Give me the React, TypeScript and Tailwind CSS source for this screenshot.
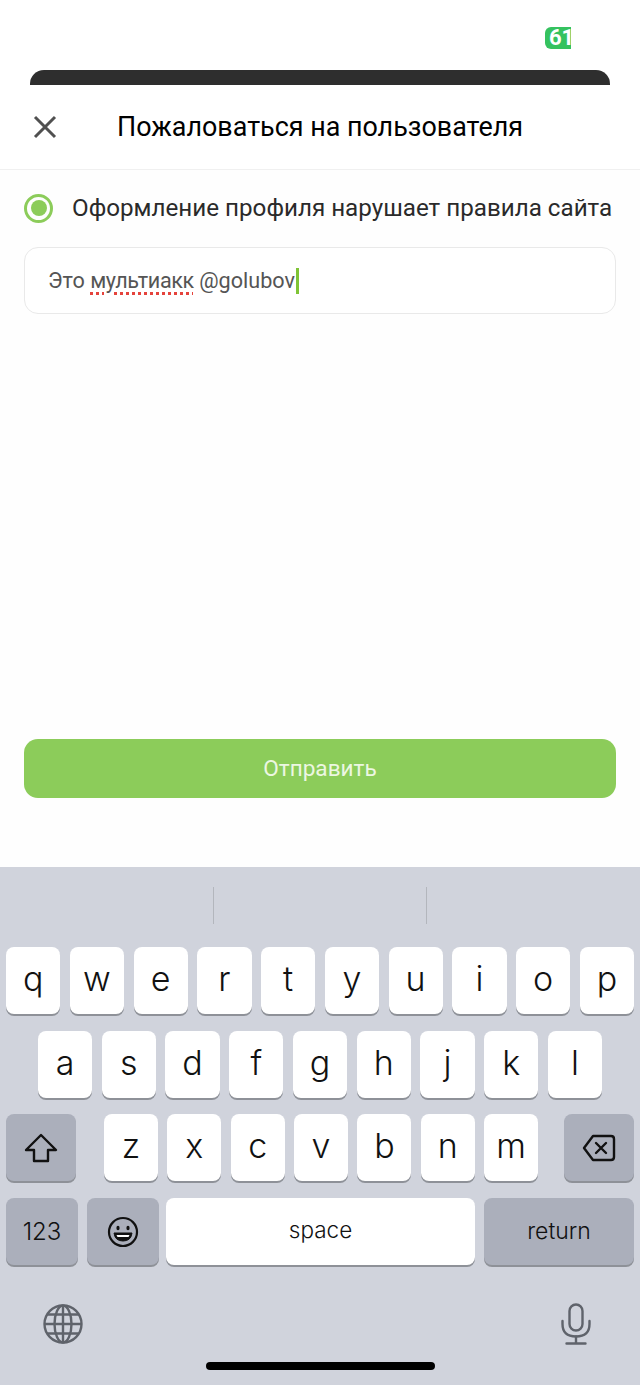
import React from 'react';

const rowOne = ['q', 'w', 'e', 'r', 't', 'y', 'u', 'i', 'o', 'p'];
const rowTwo = ['a', 's', 'd', 'f', 'g', 'h', 'j', 'k', 'l'];
const rowThree = ['z', 'x', 'c', 'v', 'b', 'n', 'm'];

const keyBase = 'flex h-[67px] items-center justify-center rounded-[8px] shadow-[0_2px_0_#8e9198]';

const LetterKey: React.FC<{ label: string }> = ({ label }) => (
  <div className={`${keyBase} flex-1 bg-white pb-1 font-['Inter',sans-serif] text-[34px] font-light text-[#111]`}>{label}</div>
);

const ShiftIcon = () => (
  <svg width="34" height="30" viewBox="0 0 34 30" fill="none" stroke="#111" strokeWidth="2.4" strokeLinejoin="round">
    <path d="M17 2 L32 17 H24 V28 H10 V17 H2 Z" />
  </svg>
);

const DeleteIcon = () => (
  <svg width="34" height="28" viewBox="0 0 34 28" fill="none" stroke="#111" strokeWidth="2.4" strokeLinejoin="round" strokeLinecap="round">
    <path d="M11 2 H29 Q32 2 32 5 V23 Q32 26 29 26 H11 L2 14 Z" />
    <path d="M14 9 L24 19 M24 9 L14 19" />
  </svg>
);

const EmojiIcon = () => (
  <svg width="32" height="32" viewBox="0 0 32 32" fill="none" stroke="#111" strokeWidth="2.2">
    <circle cx="16" cy="16" r="14" />
    <ellipse cx="11" cy="12" rx="1.6" ry="2.2" fill="#111" stroke="none" />
    <ellipse cx="21" cy="12" rx="1.6" ry="2.2" fill="#111" stroke="none" />
    <path d="M7 17 H25 Q24 25 16 25 Q8 25 7 17 Z" fill="#111" stroke="#111" strokeWidth="1" strokeLinejoin="round" />
    <path d="M9.5 19 H22.5 L21.5 21 H10.5 Z" fill="#fff" stroke="none" />
  </svg>
);

const GlobeIcon = () => (
  <svg width="40" height="40" viewBox="0 0 40 40" fill="none" stroke="#5f636b" strokeWidth="2.4">
    <circle cx="20" cy="20" r="18.5" />
    <ellipse cx="20" cy="20" rx="8.5" ry="18.5" />
    <path d="M20 1.5 V38.5 M1.5 20 H38.5 M4.5 10.5 H35.5 M4.5 29.5 H35.5" />
  </svg>
);

const MicIcon = () => (
  <svg width="30" height="42" viewBox="0 0 30 42" fill="none" stroke="#5f636b" strokeWidth="2.4" strokeLinecap="round">
    <rect x="8.5" y="1.5" width="13" height="26" rx="6.5" />
    <path d="M1.5 18 V21 Q1.5 33.5 15 33.5 Q28.5 33.5 28.5 21 V18" />
    <path d="M15 33.5 V40.5 M5.5 40.5 H24.5" />
  </svg>
);

const App: React.FC = () => {
  return (
    <div className="flex h-[1385px] w-[640px] flex-col overflow-hidden bg-white font-['Roboto',sans-serif]">
      <div className="h-[70px] pl-[545px] pt-[27px]">
        <div className="flex h-[22px] w-[26px] items-center overflow-hidden rounded-l-[6px] bg-[#35c25f] pl-[4px] text-[22px] font-bold leading-none text-white">
          61
        </div>
      </div>
      <div className="mx-[30px] h-[15px] rounded-t-[14px] bg-[#2e2e2e]" />

      <div className="relative flex h-[85px] items-center justify-center border-b border-[#f0f0f0]">
        <svg className="absolute left-[33px] top-[30px]" width="24" height="24" viewBox="0 0 24 24" fill="none" stroke="#505050" strokeWidth="3">
          <path d="M2 2 L22 22 M22 2 L2 22" />
        </svg>
        <h1 className="text-[26.9px] font-normal text-black">Пожаловаться на пользователя</h1>
      </div>

      <div className="flex flex-1 flex-col bg-[#fefefe] px-6">
        <div className="mt-5 flex items-center gap-[19px]">
          <div className="flex h-[29px] w-[29px] shrink-0 items-center justify-center rounded-full border-[3px] border-[#8ccc5a]">
            <div className="h-[16px] w-[16px] rounded-full bg-[#8ccc5a]" />
          </div>
          <span className="whitespace-nowrap text-[24.2px] text-[#2a2a2a]">Оформление профиля нарушает правила сайта</span>
        </div>

        <div className="mt-[21px] flex h-[67px] items-center rounded-[14px] border border-[#e9e9e9] bg-white pl-[23px] text-[21.6px] text-[#555]">
          <span>
            Это{' '}
            <span className="tracking-[-0.4px] underline decoration-[#e5433c] decoration-dotted decoration-[3px] underline-offset-[4px]">мультиакк</span>{' '}
            @golubov
          </span>
          <span className="ml-px h-[26px] w-[3px] bg-[#7fc436]" />
        </div>

        <button className="mt-auto mb-[69px] flex h-[59px] items-center justify-center rounded-[14px] bg-[#8ccc5a] text-[22.6px] text-[#ecf7e2]">
          Отправить
        </button>
      </div>

      <div className="flex h-[518px] flex-col bg-[#d0d3dc] px-[6px] font-['Inter',sans-serif]">
        <div className="flex h-[80px] items-start justify-center gap-[212px] pt-[20px]">
          <div className="h-[37px] w-px bg-[#b3b6bd]" />
          <div className="h-[37px] w-px bg-[#b3b6bd]" />
        </div>

        <div className="flex gap-[9.5px]">
          {rowOne.map(k => <LetterKey key={k} label={k} />)}
        </div>

        <div className="mt-[17px] flex gap-[9.5px] px-[32px]">
          {rowTwo.map(k => <LetterKey key={k} label={k} />)}
        </div>

        <div className="mt-[16px] flex">
          <div className={`${keyBase} w-[70px] bg-[#abafbb]`}><ShiftIcon /></div>
          <div className="ml-[28px] mr-[26px] flex flex-1 gap-[9.5px]">
            {rowThree.map(k => <LetterKey key={k} label={k} />)}
          </div>
          <div className={`${keyBase} w-[70px] bg-[#abafbb]`}><DeleteIcon /></div>
        </div>

        <div className="mt-[17px] flex gap-[9px]">
          <div className={`${keyBase} w-[72px] bg-[#abafbb] text-[24px] font-light text-[#111]`}>123</div>
          <div className={`${keyBase} w-[72px] bg-[#abafbb]`}><EmojiIcon /></div>
          <div className={`${keyBase} ml-[-2px] flex-1 bg-white pb-1 text-[22.5px] font-light text-[#111]`}>space</div>
          <div className={`${keyBase} w-[150px] bg-[#abafbb] text-[23px] font-light text-[#111]`}>return</div>
        </div>

        <div className="mt-[38px] flex items-center justify-between pl-[37px] pr-[43px]">
          <GlobeIcon />
          <MicIcon />
        </div>

        <div className="mt-[17px] flex justify-center">
          <div className="h-[8px] w-[229px] rounded-full bg-black" />
        </div>
      </div>
    </div>
  );
};

export default App;
